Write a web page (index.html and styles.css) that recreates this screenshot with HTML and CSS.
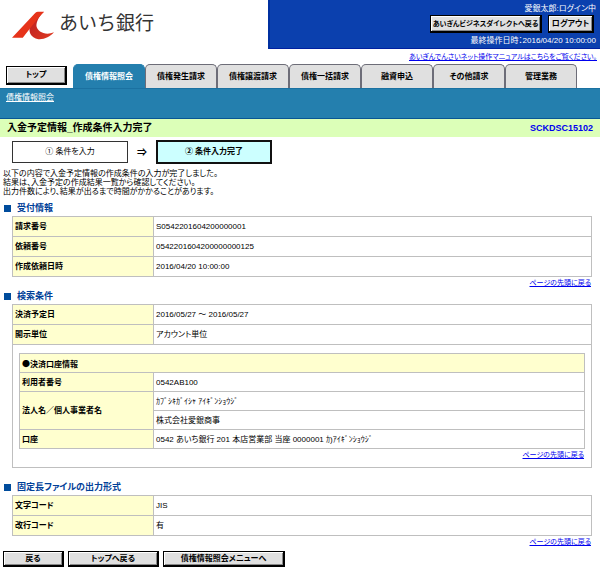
FILE: index.html
```html
<!DOCTYPE html>
<html lang="ja">
<head>
<meta charset="utf-8">
<title>入金予定情報_作成条件入力完了</title>
<link rel="stylesheet" href="styles.css">
</head>
<body id="top">
<header class="header">
  <div class="brand">
    <svg class="brand-mark" viewBox="0 0 44 30" aria-hidden="true">
      <defs>
        <linearGradient id="hook" x1="0" y1="0" x2="1" y2="1">
          <stop offset="0" stop-color="#b81c22"/>
          <stop offset="1" stop-color="#e03a20"/>
        </linearGradient>
      </defs>
      <path d="M32 1C27 6 25 11 25 15C26 21 34 25 43 21.500C39 26 33 29 27 28.500C19 27 16 21 19 13Z" fill="url(#hook)"/>
      <path d="M0 27L24 1.500Q25 0.500 26.500 0.500H33C29 4 26 8 22 13L11 27Z" fill="#e6331a"/>
    </svg>
    <span class="brand-name">あいち銀行</span>
  </div>
  <div class="session">
    <div class="user">愛銀太郎:ログイン中</div>
    <div class="session-actions">
      <button class="btn btn-session" type="button">あいぎんビジネスダイレクトへ戻る</button>
      <button class="btn btn-session btn-logout" type="button">ログアウト</button>
    </div>
    <div class="last-time">最終操作日時：2016/04/20 10:00:00</div>
  </div>
</header>
<div class="manual"><a href="#manual">あいぎんでんさいネット操作マニュアルはこちらをご覧ください。</a></div>
<nav class="nav">
  <button class="btn btn-top" type="button">トップ</button>
  <div class="tabs">
    <a class="tab tab-active" href="#t1">債権情報照会</a>
    <a class="tab" href="#t2">債権発生請求</a>
    <a class="tab" href="#t3">債権譲渡請求</a>
    <a class="tab" href="#t4">債権一括請求</a>
    <a class="tab" href="#t5">融資申込</a>
    <a class="tab" href="#t6">その他請求</a>
    <a class="tab" href="#t7">管理業務</a>
  </div>
</nav>
<div class="subnav"><a href="#inquiry">債権情報照会</a></div>
<main>
  <div class="title-bar">
    <h1>入金予定情報_作成条件入力完了</h1>
    <span class="screen-id">SCKDSC15102</span>
  </div>
  <div class="steps">
    <div class="step">① 条件を入力</div>
    <div class="arrow">⇒</div>
    <div class="step step-current">② 条件入力完了</div>
  </div>
  <p class="message">以下の内容で入金予定情報の作成条件の入力が完了しました。<br>結果は、入金予定の作成結果一覧から確認してください。<br>出力件数により、結果が出るまで時間がかかることがあります。</p>

  <section class="section">
    <h2>受付情報</h2>
    <table class="data">
      <tr><th scope="row">請求番号</th><td>S0542201604200000001</td></tr>
      <tr><th scope="row">依頼番号</th><td>0542201604200000000125</td></tr>
      <tr><th scope="row">作成依頼日時</th><td>2016/04/20 10:00:00</td></tr>
    </table>
    <div class="to-top"><a href="#top">ページの先頭に戻る</a></div>
  </section>

  <section class="section">
    <h2>検索条件</h2>
    <table class="data">
      <tr><th scope="row">決済予定日</th><td>2016/05/27 ～ 2016/05/27</td></tr>
      <tr><th scope="row">開示単位</th><td>アカウント単位</td></tr>
      <tr><td class="nest" colspan="2">
        <table class="data data-inner">
          <tr><th class="group" colspan="2">●決済口座情報</th></tr>
          <tr><th scope="row">利用者番号</th><td>0542AB100</td></tr>
          <tr><th scope="rowgroup" rowspan="2">法人名／個人事業者名</th><td>ｶﾌﾞｼｷｶﾞｲｼｬ ｱｲｷﾞﾝｼｮｳｼﾞ</td></tr>
          <tr><td>株式会社愛銀商事</td></tr>
          <tr><th scope="row">口座</th><td>0542 あいち銀行 201 本店営業部 当座 0000001 ｶ)ｱｲｷﾞﾝｼｮｳｼﾞ</td></tr>
        </table>
        <div class="to-top"><a href="#top">ページの先頭に戻る</a></div>
      </td></tr>
    </table>
  </section>

  <section class="section section-format">
    <h2>固定長ファイルの出力形式</h2>
    <table class="data">
      <tr><th scope="row">文字コード</th><td>JIS</td></tr>
      <tr><th scope="row">改行コード</th><td>有</td></tr>
    </table>
    <div class="to-top"><a href="#top">ページの先頭に戻る</a></div>
  </section>

  <div class="actions">
    <button class="btn btn-back" type="button">戻る</button>
    <button class="btn btn-home" type="button">トップへ戻る</button>
    <button class="btn btn-menu" type="button">債権情報照会メニューへ</button>
  </div>
</main>
</body>
</html>
```
FILE: styles.css
```css
* { box-sizing: border-box; }

body {
  margin: 0;
  background: #fff;
  color: #000;
  font: 8px/9px "Liberation Sans", "Noto Sans CJK JP", sans-serif;
  font-feature-settings: "palt";
}

a { color: #00e; text-decoration: underline; }

.header { display: flex; justify-content: space-between; height: 49px; }
.brand { display: flex; align-items: flex-start; gap: 4px; padding: 11px 0 0 12px; color: #333; }
.brand-mark { width: 43px; height: 30px; }
.brand-name { font: 19px/22px "Noto Sans CJK JP", sans-serif; white-space: nowrap; }

.session {
  width: 332px;
  padding: 4px 4px 0 0;
  border-left: 2px solid #0030a0;
  border-bottom: 1px solid #0020a0;
  background: #0b40ae;
  color: #fff;
  text-align: right;
}
.session-actions { display: flex; justify-content: flex-end; gap: 6px; margin: 2px 2px 3px 0; }

.btn {
  height: 16px;
  padding: 0;
  border: 1px solid #000;
  background: #e0e0e0;
  box-shadow: inset 1px 1px #fff, inset -1px -1px #888;
  color: #000;
  font: bold 8px/12px "Liberation Sans", "Noto Sans CJK JP", sans-serif;
  font-feature-settings: inherit;
  white-space: nowrap;
}
.btn-session { width: 112px; height: 18px; border-right-width: 2px; border-bottom-width: 2px; font-size: 7px; }
.btn-logout { width: 46px; font-size: 8px; }

.manual { padding: 3px 3px 0 0; height: 15px; font-size: 7px; text-align: right; }

.nav { display: flex; align-items: flex-start; height: 24px; padding-left: 6px; }
.btn-top { width: 61px; height: 19px; margin: 2px 6px 0 0; border-right-width: 2px; border-bottom-width: 2px; }
.tabs { display: flex; flex: 0 1 504px; }
.tab {
  flex: 1;
  height: 24px;
  border: 1px solid #6d6d78;
  border-bottom: 0;
  border-radius: 5px 5px 0 0;
  background: #e0e0e0;
  color: #000;
  font-weight: bold;
  line-height: 24px;
  text-align: center;
  text-decoration: none;
  white-space: nowrap;
}
.tab-active { border-color: #247fae; background: #247fae; color: #fff; }

.subnav {
  height: 31px;
  padding: 4px 6px;
  border-top: 1px solid #1b71a1;
  border-bottom: 1px solid #085694;
  background: #247fae;
}
.subnav a { color: #fff; }

.title-bar {
  display: flex;
  align-items: center;
  justify-content: space-between;
  height: 18px;
  padding: 0 7px;
  background: #dcffb8;
}
h1 { margin: 0; font-size: 10px; line-height: 18px; }
.screen-id { color: #00e; font-size: 9px; font-weight: bold; }

.steps { display: flex; align-items: center; padding: 3px 12px 4px; }
.step { width: 116px; height: 22px; border: 1px solid #333; line-height: 20px; text-align: center; }
.step-current { height: 24px; border: 2px solid #111; background: #cff; font-weight: bold; }
.arrow { width: 28px; font-size: 10px; font-weight: bold; text-align: center; }

.message { margin: 0; padding: 1px 3px 3px; }

.section { padding: 1px 8px 0 4px; }
h2 {
  display: flex;
  align-items: center;
  gap: 6px;
  margin: 0;
  height: 16px;
  color: #004098;
  font-size: 9px;
}
h2::before { content: ""; width: 7px; height: 7px; background: #004c9c; }

.data { width: calc(100% - 8px); margin-left: 8px; border-collapse: collapse; }
.data th, .data td { height: 20px; padding: 0 2px; border: 1px solid #bfbfbf; text-align: left; }
.data th { width: 141px; background: #ffffcf; }
.data .nest { padding: 8px 6px; }
.data-inner { width: 100%; margin: 0; }
.data-inner th, .data-inner td { height: 19px; }
.data-inner th { width: 134px; }
.data-inner .group { font-family: "Noto Sans CJK JP", sans-serif; }

.to-top { padding: 1px 1px 0; height: 10px; font-size: 7px; text-align: right; }
.section-format { padding-top: 11px; }

.actions { display: flex; gap: 4px; padding: 5px 3px 7px; }
.actions .btn { border-right-width: 2px; border-bottom-width: 2px; }
.btn-back { width: 61px; }
.btn-home { width: 91px; }
.btn-menu { width: 122px; }
```
